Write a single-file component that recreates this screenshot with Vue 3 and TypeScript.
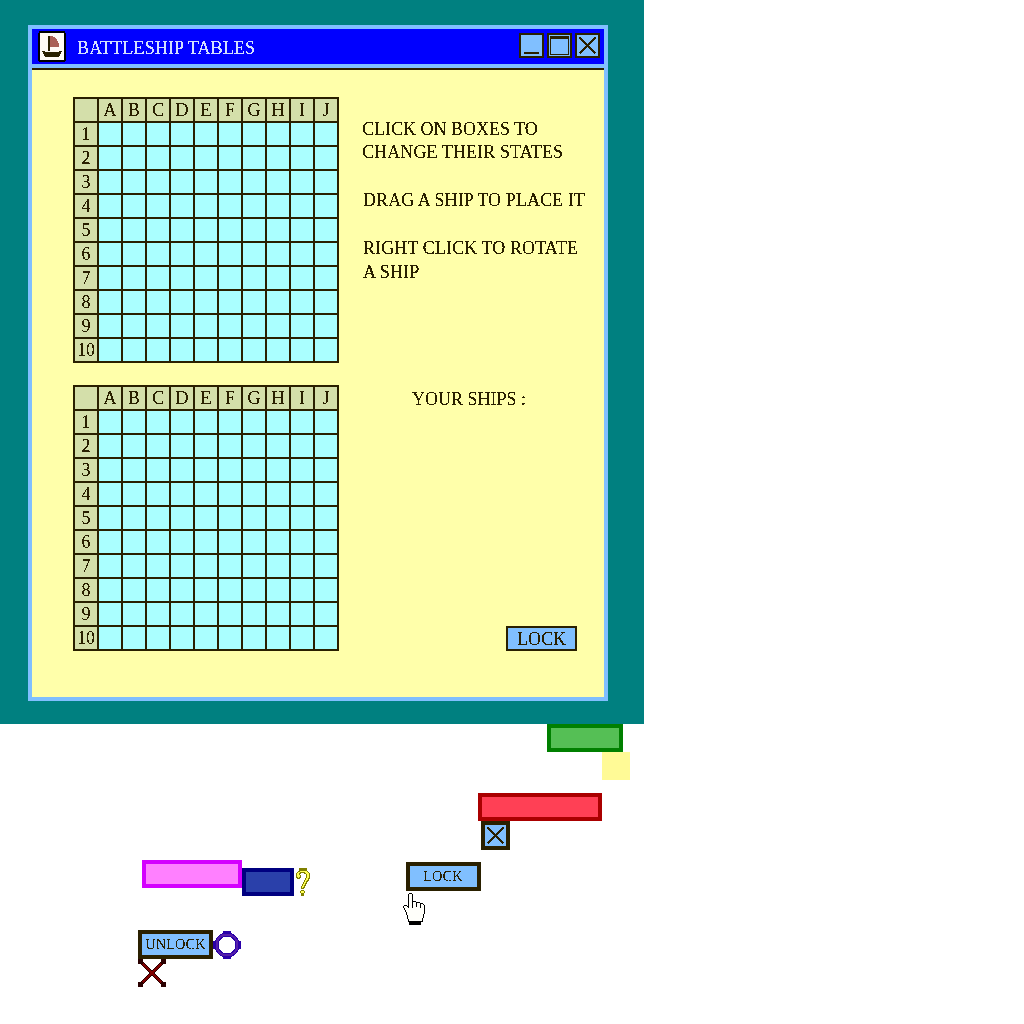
<script setup lang="ts">
interface Line {
  text: string
  spacing: number
  height: number
  indent: number
}

const columns: string[] = ['A', 'B', 'C', 'D', 'E', 'F', 'G', 'H', 'I', 'J']
const rows: number[] = [1, 2, 3, 4, 5, 6, 7, 8, 9, 10]
const boards: string[] = ['enemy', 'own']

const help: Line[] = [
  { text: 'CLICK ON BOXES TO', spacing: 0, height: 23, indent: 0 },
  { text: 'CHANGE THEIR STATES', spacing: 0.1, height: 24, indent: 0 },
  { text: '', spacing: 0, height: 24, indent: 0 },
  { text: 'DRAG A SHIP TO PLACE IT', spacing: 0.07, height: 24, indent: 1 },
  { text: '', spacing: 0, height: 24, indent: 0 },
  { text: 'RIGHT CLICK TO ROTATE', spacing: 0.1, height: 24, indent: 1 },
  { text: 'A SHIP', spacing: 0.15, height: 24, indent: 1 },
]
</script>

<template>
  <div class="page">
    <!-- Hard-edged lettering: alpha is either on or off -->
    <svg class="defs" width="0" height="0">
      <filter id="crisp" x="0" y="0" width="100%" height="100%" color-interpolation-filters="sRGB">
        <feComponentTransfer><feFuncA type="discrete" tableValues="0 0 1 1 1" /></feComponentTransfer>
      </filter>
      <filter id="thin" x="0" y="0" width="100%" height="100%" color-interpolation-filters="sRGB">
        <feComponentTransfer><feFuncA type="discrete" tableValues="0 1" /></feComponentTransfer>
      </filter>
    </svg>

    <main class="desktop">
      <section class="window">
        <header class="titlebar">
          <svg class="logo" width="28" height="31" shape-rendering="crispEdges">
            <path d="M1 0H27V2H28V30H27V31H1V30H0V2H1Z" fill="#000" />
            <path d="M2 2H26V29H2Z" fill="#fffaf5" />
            <path d="M12 5H15V6H17V7H18V8H19V10H20V12H21V16H12Z" fill="#aa5f55" />
            <path d="M10 5H12V20H10Z" fill="#2a2000" />
            <path d="M4 20H7V21H21V20H24V21H23V23H22V25H21V26H7V25H6V23H5V21H4Z" fill="#2a2000" />
          </svg>
          <h1 class="type title">BATTLESHIP TABLES</h1>
          <div class="controls">
            <svg width="25" height="25" shape-rendering="crispEdges">
              <path d="M1 1H24V24H1Z" fill="#80bfff" stroke="#2a2000" stroke-width="2" />
              <path d="M5 19H20V21H5Z" fill="#2a2000" />
            </svg>
            <svg width="25" height="25" shape-rendering="crispEdges">
              <path d="M1 1H24V24H1Z" fill="#80bfff" stroke="#2a2000" stroke-width="2" />
              <path d="M3 3H22V22H3ZM4 6V21H21V6Z" fill="#2a2000" fill-rule="evenodd" />
            </svg>
            <svg width="25" height="25" shape-rendering="crispEdges">
              <path d="M1 1H24V24H1Z" fill="#80bfff" stroke="#2a2000" stroke-width="2" />
              <path d="M4.5 4.5L20.5 20.5M20.5 4.5L4.5 20.5" stroke="#2a2000" stroke-width="1.8" />
            </svg>
          </div>
        </header>

        <div class="body">
          <div class="boards">
            <div v-for="board in boards" :key="board" class="board">
              <div class="cell head"></div>
              <div v-for="c in columns" :key="c" class="cell head"><span class="type">{{ c }}</span></div>
              <template v-for="r in rows" :key="r">
                <div class="cell head"><span class="type">{{ r }}</span></div>
                <div v-for="c in columns" :key="c" class="cell"></div>
              </template>
            </div>
          </div>
          <aside class="side">
            <div class="help">
              <p
                v-for="(line, i) in help"
                :key="i"
                class="type"
                :style="{
                  letterSpacing: line.spacing + 'px',
                  height: line.height + 'px',
                  paddingLeft: line.indent + 'px',
                }"
              >{{ line.text }}</p>
            </div>
            <p class="type ships">YOUR SHIPS :</p>
            <button class="lock"><span class="type">LOCK</span></button>
          </aside>
        </div>
      </section>
    </main>

    <!-- Loose pieces lying on the canvas -->
    <div class="piece green"></div>
    <div class="piece note"></div>
    <div class="piece red"></div>
    <div class="piece magenta"></div>
    <div class="piece navy"></div>
    <div class="piece key small-lock"><span class="type">LOCK</span></div>
    <div class="piece key unlock"><span class="type">UNLOCK</span></div>

    <svg class="piece close" width="29" height="29" shape-rendering="crispEdges">
      <path d="M2 2H27V27H2Z" fill="#80bfff" stroke="#2a2000" stroke-width="4" />
      <path d="M6.5 6.5L22.5 22.5M22.5 6.5L6.5 22.5" stroke="#2a2000" stroke-width="1.8" />
    </svg>

    <svg class="piece hand" width="23" height="33" shape-rendering="crispEdges">
      <path
        d="M6.5 .5H8.5L9.5 1.5V8.5H12.5L13.5 9.5H16.5L17.5 10.5H19.5L21.5 12.5V20.5L20.5 21.5V24.5L19.5 25.5V28.5H5.5V26.5L4.5 25.5V22.5L3.5 21.5V19.5L2.5 18.5V17.5L1.5 16.5V15.5L.5 14.5V13.5L1.5 12.5H3.5L5.5 14.5V1.5Z"
        fill="#fffffa" stroke="#000" stroke-width="1"
      />
      <path d="M9 8H10V15H9ZM13 9H14V14H13ZM17 10H18V15H17Z" fill="#000" />
      <path d="M6 29H18V32H6Z" fill="#000" />
    </svg>

    <svg class="piece question" width="15" height="28" shape-rendering="crispEdges">
      <path d="M3 0H11V3H12V4H13V5H14V11H13V13H12V14H11V16H10V18H9V20H8V21H5V18H6V16H7V14H8V12H9V10H10V6H8V5H5V6H4V7H5V10H4V11H1V10H0V5H1V4H2V3H3Z" fill="#808000" />
      <path d="M4 3H11V4H12V5H13V10H12V12H11V13H10V15H9V17H8V19H7V20H6V18H7V16H8V14H9V12H10V10H11V6H10V5H9V4H4V5H3V7H4V9H3V10H2V9H1V5H2V4H4Z" fill="#ffff55" />
      <path d="M5 22H8V23H9V25H8V28H5V25H4V23H5Z" fill="#808000" />
      <path d="M5 23H8V25H5Z" fill="#ffff55" />
    </svg>

    <svg class="piece ring" width="28" height="28" shape-rendering="crispEdges">
      <path d="M10 0H18V3H10ZM10 25H18V28H10ZM0 10H3V18H0ZM25 10H28V18H25Z" fill="#2a00aa" />
      <circle cx="14" cy="14" r="10.5" fill="#fff" stroke="#2a00aa" stroke-width="4" />
      <circle cx="14" cy="14" r="10.5" fill="none" stroke="#551faa" stroke-width="2" />
    </svg>

    <svg class="piece cross" width="28" height="28" shape-rendering="crispEdges">
      <path d="M3 3L25 25M25 3L3 25" stroke="#2a0000" stroke-width="3.6" />
      <path d="M3 3L25 25M25 3L3 25" stroke="#800000" stroke-width="2" />
      <path d="M0 0H5V5H0ZM23 0H28V5H23ZM0 23H5V28H0ZM23 23H28V28H23Z" fill="#2a0000" />
    </svg>
  </div>
</template>

<style>
body {
  margin: 0;
  background: #fff;
}
</style>

<style scoped>
.page {
  position: relative;
  width: 1024px;
  height: 1024px;
  overflow: hidden;
  background: #fff;
  color: #2a2000;
  font-family: "Liberation Serif", "Times New Roman", serif;
  font-size: 18px;
  line-height: 24px;
}
.defs {
  position: absolute;
}
.type {
  filter: url(#crisp);
  white-space: pre;
}
.desktop {
  box-sizing: border-box;
  width: 644px;
  height: 724px;
  padding: 25px 36px 23px 28px;
  background: #008080;
}
.window {
  box-sizing: border-box;
  width: 580px;
  height: 676px;
  border: 4px solid #80bfff;
  background: #ffffaa;
}
.titlebar {
  display: flex;
  align-items: flex-start;
  height: 35px;
  border-bottom: 4px solid #80bfff;
  background: #0000ff;
}
.logo {
  margin: 2px 0 0 6px;
}
.title {
  margin: 7px 0 0 11px;
  font-size: 18px;
  font-weight: 400;
  letter-spacing: 0.12px;
  color: #d4dfff;
}
.controls {
  display: flex;
  gap: 3px;
  margin: 4px 4px 0 auto;
}
.body {
  display: flex;
  border-top: 2px solid #2a2000;
  padding: 27px 0 0 41px;
}
.boards {
  display: flex;
  flex-direction: column;
  gap: 22px;
}
.board {
  display: grid;
  grid-template-columns: repeat(11, 22px);
  grid-auto-rows: 22px;
  gap: 2px;
  padding: 2px;
  background: #2a2000;
}
.cell {
  display: flex;
  justify-content: center;
  background: #aaffff;
}
.head {
  background: #d4dfaa;
}
.head .type {
  line-height: 24px;
  height: 24px;
  margin: -1px -2px;
}
.side {
  display: flex;
  flex-direction: column;
  width: 238px;
  margin-left: 23px;
}
.help {
  height: 270px;
  padding-top: 20px;
}
.help p,
.ships {
  height: 24px;
  margin: 0;
}
.ships {
  margin-left: 50px;
}
.lock {
  align-self: flex-end;
  width: 71px;
  height: 25px;
  margin: 215px 23px 0 0;
  padding: 0;
  border: 2px solid #2a2000;
  background: #80bfff;
  color: inherit;
  font: inherit;
}
.lock .type {
  display: block;
  height: 21px;
  line-height: 22px;
}
.piece {
  position: absolute;
  box-sizing: border-box;
}
.green {
  left: 547px;
  top: 724px;
  width: 76px;
  height: 28px;
  border: 4px solid #008000;
  background: #55bf55;
}
.note {
  left: 602px;
  top: 752px;
  width: 28px;
  height: 28px;
  background: #fffa96;
}
.red {
  left: 478px;
  top: 793px;
  width: 124px;
  height: 28px;
  border: 4px solid #aa0000;
  background: #ff4055;
}
.magenta {
  left: 142px;
  top: 860px;
  width: 100px;
  height: 28px;
  border: 4px solid #d400ff;
  background: #ff80ff;
}
.navy {
  left: 242px;
  top: 868px;
  width: 52px;
  height: 28px;
  border: 4px solid #000080;
  background: #2a40aa;
}
.key {
  display: flex;
  justify-content: center;
  width: 75px;
  height: 29px;
  border: 4px solid #2a2000;
  background: #80bfff;
  font-size: 14.5px;
  line-height: 21px;
}
.key .type {
  filter: url(#thin);
}
.small-lock {
  left: 406px;
  top: 862px;
  padding-right: 1px;
}
.unlock {
  left: 138px;
  top: 930px;
}
.close {
  left: 481px;
  top: 821px;
}
.hand {
  left: 403px;
  top: 893px;
}
.question {
  left: 296px;
  top: 868px;
}
.ring {
  left: 213px;
  top: 931px;
}
.cross {
  left: 138px;
  top: 959px;
}
</style>
